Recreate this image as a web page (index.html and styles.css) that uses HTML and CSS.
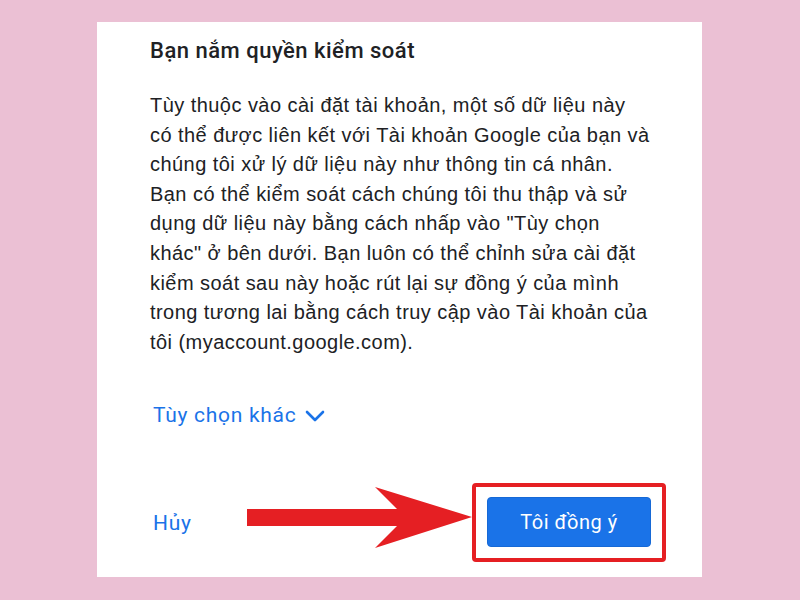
FILE: index.html
```html
<!DOCTYPE html>
<html lang="vi">
<head>
    <meta charset="UTF-8">
    <meta name="viewport" content="width=device-width, initial-scale=1.0">
    <title>Bạn nắm quyền kiểm soát</title>
    <link rel="stylesheet" href="styles.css">
</head>
<body>
    <div class="card">
        <h2 class="title">Bạn nắm quyền kiểm soát</h2>
        <p class="text">
            Tùy thuộc vào cài đặt tài khoản, một số dữ liệu này<br>
            có thể được liên kết với Tài khoản Google của bạn và<br>
            chúng tôi xử lý dữ liệu này như thông tin cá nhân.<br>
            Bạn có thể kiểm soát cách chúng tôi thu thập và sử<br>
            dụng dữ liệu này bằng cách nhấp vào "Tùy chọn<br>
            khác" ở bên dưới. Bạn luôn có thể chỉnh sửa cài đặt<br>
            kiểm soát sau này hoặc rút lại sự đồng ý của mình<br>
            trong tương lai bằng cách truy cập vào Tài khoản của<br>
            tôi (myaccount.google.com).
        </p>

        <a class="more" href="#">Tùy chọn khác
            <svg class="chevron" width="20" height="12" viewBox="0 0 20 12">
                <path d="M2 2 L10 10 L18 2" fill="none" stroke="#1a73e8" stroke-width="2.6" stroke-linecap="round" stroke-linejoin="round"/>
            </svg>
        </a>

        <div class="footer">
            <a class="cancel" href="#">Hủy</a>
            <div class="highlight">
                <button class="agree">Tôi đồng ý</button>
            </div>
        </div>

        <!-- red arrow pointing at the button -->
        <svg class="arrow" width="226" height="62" viewBox="0 0 226 62">
            <polygon points="0,22 150,22 128,0 225,30 128,61 150,39 0,39" fill="#e51f23"/>
        </svg>
    </div>
</body>
</html>
```

FILE: styles.css
```css
body {
    margin: 0;
    background: #ebc0d4;
    font-family: "Liberation Sans", Arial, sans-serif;
}

.card {
    position: relative;
    box-sizing: border-box;
    width: 605px;
    height: 555px;
    margin: 22px 0 0 97px;
    padding: 15px 36px 0 53px;
    background: #fff;
    display: flex;
    flex-direction: column;
    align-items: flex-start;
}

.title {
    margin: 0;
    font-family: Roboto, sans-serif;
    font-size: 22px;
    font-weight: 500;
    line-height: 28px;
    letter-spacing: 0.5px;
    color: #202124;
}

.text {
    margin: 26px 0 0;
    font-size: 20px;
    line-height: 29.6px;
    letter-spacing: 0.45px;
    color: #202124;
    white-space: nowrap;
}

.more {
    margin: 44px 0 0 3px;
    display: flex;
    align-items: center;
    gap: 9px;
    font-family: Roboto, sans-serif;
    font-size: 21px;
    line-height: 28px;
    letter-spacing: 0.7px;
    color: #1a73e8;
    text-decoration: none;
}

.chevron {
    margin-top: 2px;
}

.footer {
    margin-top: 54px;
    align-self: stretch;
    display: flex;
    align-items: center;
    justify-content: space-between;
}

.cancel {
    margin-left: 3px;
    font-family: Roboto, sans-serif;
    font-size: 21px;
    letter-spacing: 0.7px;
    color: #1a73e8;
    text-decoration: none;
}

.highlight {
    padding: 10px 11px 11px;
    border: 4px solid #e51f23;
    border-radius: 4px;
}

.agree {
    display: block;
    width: 164px;
    height: 50px;
    border: 1px solid #1669d6;
    border-radius: 4px;
    background: #1a73e8;
    color: #fff;
    font-family: Roboto, sans-serif;
    font-size: 20px;
    letter-spacing: 0.5px;
    cursor: pointer;
}

.arrow {
    position: absolute;
    left: 150px;
    top: 465px;
}
```
